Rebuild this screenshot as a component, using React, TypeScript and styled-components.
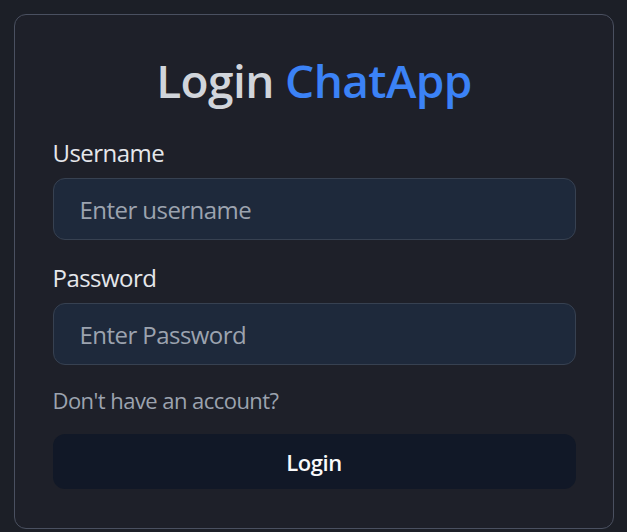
import React from "react";
import styled, { createGlobalStyle } from "styled-components";

const GlobalStyle = createGlobalStyle`
  html, body {
    margin: 0;
    padding: 0;
    background: #1c1f27;
  }
  body {
    font-family: "Open Sans", "Noto Sans", sans-serif;
  }
  * { box-sizing: border-box; }
`;

const Page = styled.div`
  display: flex;
  justify-content: center;
  padding: 14px 13px 3px;
  min-height: 532px;
`;

const Card = styled.form`
  width: 600px;
  background: #1e2029;
  border: 1px solid #4a5060;
  border-radius: 12px;
  padding: 38px 37px 38px 38px;
  display: flex;
  flex-direction: column;
`;

const Title = styled.h1`
  margin: 0;
  font-size: 46px;
  line-height: 55px;
  font-weight: 600;
  letter-spacing: -0.6px;
  text-align: center;
  color: #d1d5db;
`;

const Brand = styled.span`
  color: #3b82f6;
`;

const Field = styled.div<{ $top: number }>`
  display: flex;
  flex-direction: column;
  gap: 9px;
  margin-top: ${(p) => p.$top}px;
`;

const Label = styled.label`
  font-size: 24px;
  line-height: 32px;
  letter-spacing: -0.55px;
  color: #e5e7eb;
`;

const Input = styled.input`
  height: 62px;
  width: 100%;
  padding: 0 26px;
  font-family: inherit;
  font-size: 24px;
  letter-spacing: -0.55px;
  color: #e5e7eb;
  background: #1e293b;
  border: 1px solid #374151;
  border-radius: 12px;
  outline: none;
  &::placeholder {
    color: #9ca3af;
  }
`;

const Hint = styled.a`
  margin-top: 20px;
  font-size: 22px;
  line-height: 30px;
  letter-spacing: -0.55px;
  color: #9ca3af;
  text-decoration: none;
`;

const Button = styled.button`
  margin-top: 19px;
  height: 55px;
  width: 100%;
  border: none;
  border-radius: 12px;
  background: #111827;
  color: #f9fafb;
  font-family: inherit;
  font-size: 22px;
  font-weight: 600;
  letter-spacing: -0.4px;
`;

export default function App() {
  return (
    <>
      <GlobalStyle />
      <Page>
        <Card onSubmit={(e) => e.preventDefault()}>
          <Title>
            Login <Brand>ChatApp</Brand>
          </Title>
          <Field $top={29}>
            <Label>Username</Label>
            <Input type="text" placeholder="Enter username" />
          </Field>
          <Field $top={22}>
            <Label>Password</Label>
            <Input type="password" placeholder="Enter Password" />
          </Field>
          <Hint href="#">Don't have an account?</Hint>
          <Button type="submit">Login</Button>
        </Card>
      </Page>
    </>
  );
}
